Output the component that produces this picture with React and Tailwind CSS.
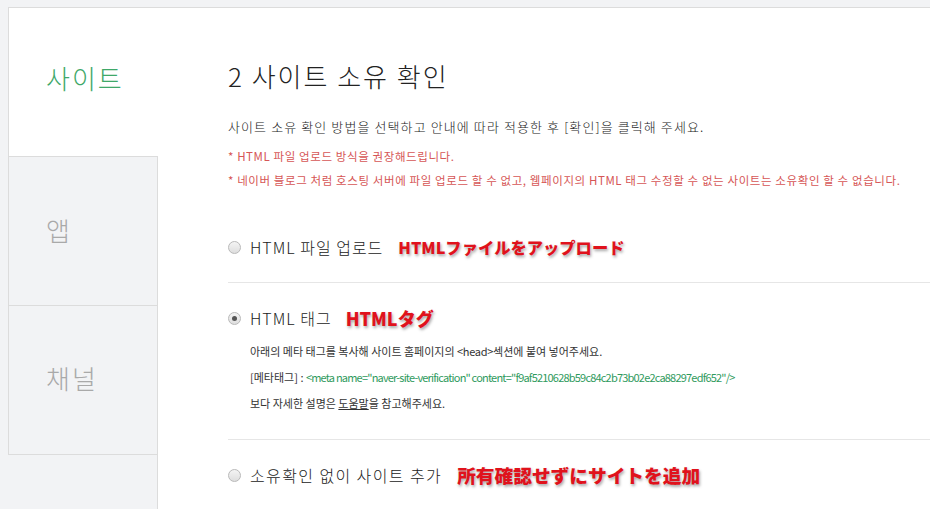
import React from "react";

const kr = { fontFamily: '"Noto Sans CJK KR", "Noto Sans", sans-serif' };
const jp = { fontFamily: '"Noto Sans CJK JP", "Noto Sans", sans-serif' };

function Radio({ checked }) {
  return (
    <span className="relative inline-flex h-[13px] w-[13px] shrink-0 items-center justify-center rounded-full border border-[#b9b9b9] bg-gradient-to-b from-[#f4f4f4] to-[#dedede]">
      {checked && <span className="h-[5px] w-[5px] rounded-full bg-[#555]" />}
    </span>
  );
}

function Note({ children, className = "" }) {
  return (
    <span
      style={jp}
      className={"font-black text-[#e0121c] [text-shadow:1px_2px_3px_rgba(0,0,0,0.35)] " + className}
    >
      {children}
    </span>
  );
}

function Option({ checked, label, note, labelClass, noteClass }) {
  return (
    <div className="flex items-center h-[24px]">
      <Radio checked={checked} />
      <span className={"ml-[9px] text-[16px] font-light text-[#222] " + labelClass} style={kr}>{label}</span>
      <Note className={noteClass}>{note}</Note>
    </div>
  );
}

export default function App() {
  return (
    <div className="min-h-[509px] w-[930px] overflow-hidden bg-[#f2f3f5] pt-[7px] pl-[8px]" style={kr}>
      <div className="flex min-h-[502px] border-t border-[#dcdcdc] bg-white">
        {/* side tabs */}
        <div className="flex w-[150px] shrink-0 flex-col bg-[#f2f3f5]">
          <div className="flex h-[149px] items-center border-l border-b border-[#dcdcdc] bg-white pl-[37px] pb-[9px]">
            <span className="text-[26px] font-light tracking-[2px] text-[#3fa869]">사이트</span>
          </div>
          <div className="flex h-[149px] items-center border-l border-r border-b border-[#dcdcdc] pl-[37px] pb-[4px]">
            <span className="text-[26px] font-light text-[#a9a9a9]">앱</span>
          </div>
          <div className="flex h-[149px] items-center border-l border-r border-b border-[#dcdcdc] pl-[37px] pb-[6px]">
            <span className="text-[26px] font-light tracking-[2px] text-[#a9a9a9]">채널</span>
          </div>
          <div className="flex-1 border-r border-[#dcdcdc]" />
        </div>

        {/* content */}
        <div className="flex-1 pl-[70px] pt-[52px]">
          <h1 className="text-[26px] font-light leading-[32px] tracking-[2px] text-[#222]">2 사이트 소유 확인</h1>
          <p className="mt-[26px] text-[13px] font-light leading-[18px] tracking-[1.1px] text-[#222]">
            사이트 소유 확인 방법을 선택하고 안내에 따라 적용한 후 [확인]을 클릭해 주세요.
          </p>
          <p className="mt-[12px] text-[11.5px] leading-[16px] tracking-[0.6px] text-[#d65656]">* HTML 파일 업로드 방식을 권장해드립니다.</p>
          <p className="mt-[8px] text-[11.5px] leading-[16px] tracking-[0.6px] text-[#d65656]">
            * 네이버 블로그 처럼 호스팅 서버에 파일 업로드 할 수 없고, 웹페이지의 HTML 태그 수정할 수 없는 사이트는 소유확인 할 수 없습니다.
          </p>

          <div className="mt-[47px]">
            <Option label="HTML 파일 업로드" labelClass="tracking-[1px]" note="HTMLファイルをアップロード" noteClass="ml-[15px] text-[16.3px]" />
          </div>
          <div className="mt-[23px] border-t border-[#e6e6e6]" />

          <div className="mt-[23px]">
            <Option checked label="HTML 태그" labelClass="tracking-[1px]" note="HTMLタグ" noteClass="ml-[14px] text-[18px]" />
          </div>
          <div className="mt-[8px] pl-[22px] text-[11px] leading-[26px] text-[#333]">
            <p>
              아래의 메타 태그를 복사해 사이트 홈페이지의 <span className="tracking-[-0.3px]">&lt;head&gt;</span>섹션에 붙여 넣어주세요.
            </p>
            <p>
              [메타태그] :{" "}
              <span className="tracking-[-0.8px] text-[#2f9a5d]">
                &lt;meta name="naver-site-verification" content="f9af5210628b59c84c2b73b02e2ca88297edf652"/&gt;
              </span>
            </p>
            <p>
              보다 자세한 설명은 <span className="underline">도움말</span>을 참고해주세요.
            </p>
          </div>
          <div className="mt-[23px] border-t border-[#e6e6e6]" />

          <div className="mt-[23px]">
            <Option label="소유확인 없이 사이트 추가" labelClass="tracking-[1.4px]" note="所有確認せずにサイトを追加" noteClass="ml-[15px] text-[18.7px]" />
          </div>
        </div>
      </div>
    </div>
  );
}
